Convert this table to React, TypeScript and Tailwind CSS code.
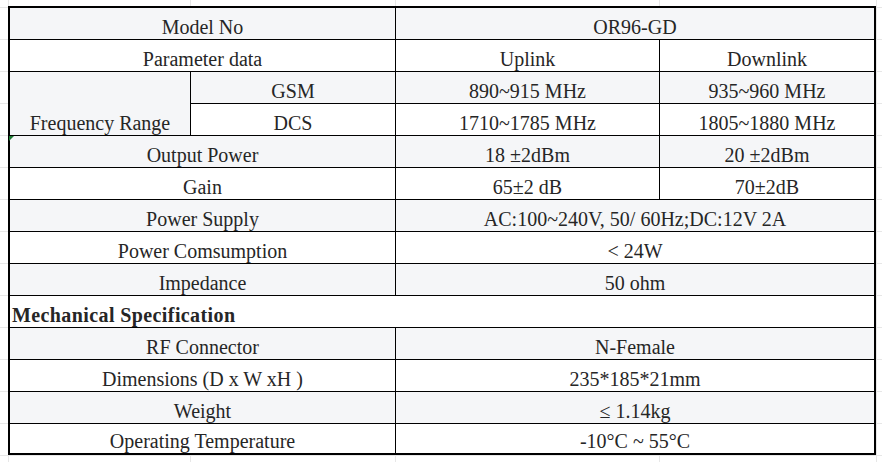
import type { ReactNode } from "react";

const GRAY = "bg-[#f5f6f8]";
const WHITE = "bg-white";

function Cell({
  children,
  className = "",
  shade = WHITE,
}: {
  children?: ReactNode;
  className?: string;
  shade?: string;
}) {
  return (
    <div
      className={`relative flex items-end justify-center whitespace-nowrap pb-px leading-[22px] ${shade} ${className}`}
    >
      {children}
    </div>
  );
}

export default function App() {
  return (
    <div className="h-[462px] w-[882px] overflow-hidden bg-white bg-[linear-gradient(to_bottom,#e7e7e7_1px,transparent_1px),linear-gradient(to_right,transparent_8px,#e7e7e7_8px,#e7e7e7_9px,transparent_9px,transparent_190px,#e7e7e7_190px,#e7e7e7_191px,transparent_191px,transparent_395px,#e7e7e7_395px,#e7e7e7_396px,transparent_396px,transparent_659px,#e7e7e7_659px,#e7e7e7_660px,transparent_660px,transparent_876px,#e7e7e7_876px,#e7e7e7_877px,transparent_877px)] bg-size-[100%_32px,100%_100%] bg-position-[0_7px,0_0] pl-[8px] pt-[6px]">
      <div className="grid w-[868px] grid-cols-[180px_204px_263px_214px] grid-rows-[repeat(13,31px)_29px] gap-px border-2 border-black bg-black font-['Liberation_Serif','Times_New_Roman',serif] text-[20px] text-[#262626]">
        <Cell className="col-span-2" shade={GRAY}>Model No</Cell>
        <Cell className="col-span-2" shade={GRAY}>OR96-GD</Cell>

        <Cell className="col-span-2">Parameter data</Cell>
        <Cell>Uplink</Cell>
        <Cell>Downlink</Cell>

        <Cell className="row-span-2" shade={GRAY}>Frequency Range</Cell>
        <Cell shade={GRAY}>GSM</Cell>
        <Cell shade={GRAY}>890~915 MHz</Cell>
        <Cell shade={GRAY}>935~960 MHz</Cell>

        <Cell>DCS</Cell>
        <Cell>1710~1785 MHz</Cell>
        <Cell>1805~1880 MHz</Cell>

        <Cell className="col-span-2" shade={GRAY}>
          <span className="absolute -left-px top-0 h-0 w-0 border-r-[5px] border-t-[5px] border-r-transparent border-t-[#1e7b34]" />
          Output Power
        </Cell>
        <Cell shade={GRAY}>18 ±2dBm</Cell>
        <Cell shade={GRAY}>20 ±2dBm</Cell>

        <Cell className="col-span-2">Gain</Cell>
        <Cell>65±2 dB</Cell>
        <Cell>70±2dB</Cell>

        <Cell className="col-span-2" shade={GRAY}>Power Supply</Cell>
        <Cell className="col-span-2" shade={GRAY}>AC:100~240V, 50/ 60Hz;DC:12V 2A</Cell>

        <Cell className="col-span-2">Power Comsumption</Cell>
        <Cell className="col-span-2">&lt; 24W</Cell>

        <Cell className="col-span-2" shade={GRAY}>Impedance</Cell>
        <Cell className="col-span-2" shade={GRAY}>50 ohm</Cell>

        <Cell className="col-span-4 justify-start pl-[2px] font-bold tracking-[0.4px]">
          Mechanical Specification
        </Cell>

        <Cell className="col-span-2" shade={GRAY}>RF Connector</Cell>
        <Cell className="col-span-2" shade={GRAY}>N-Female</Cell>

        <Cell className="col-span-2">Dimensions (D x W xH )</Cell>
        <Cell className="col-span-2">235*185*21mm</Cell>

        <Cell className="col-span-2" shade={GRAY}>Weight</Cell>
        <Cell className="col-span-2" shade={GRAY}>≤ 1.14kg</Cell>

        <Cell className="col-span-2">Operating Temperature</Cell>
        <Cell className="col-span-2">-10°C ~ 55°C</Cell>
      </div>
    </div>
  );
}
